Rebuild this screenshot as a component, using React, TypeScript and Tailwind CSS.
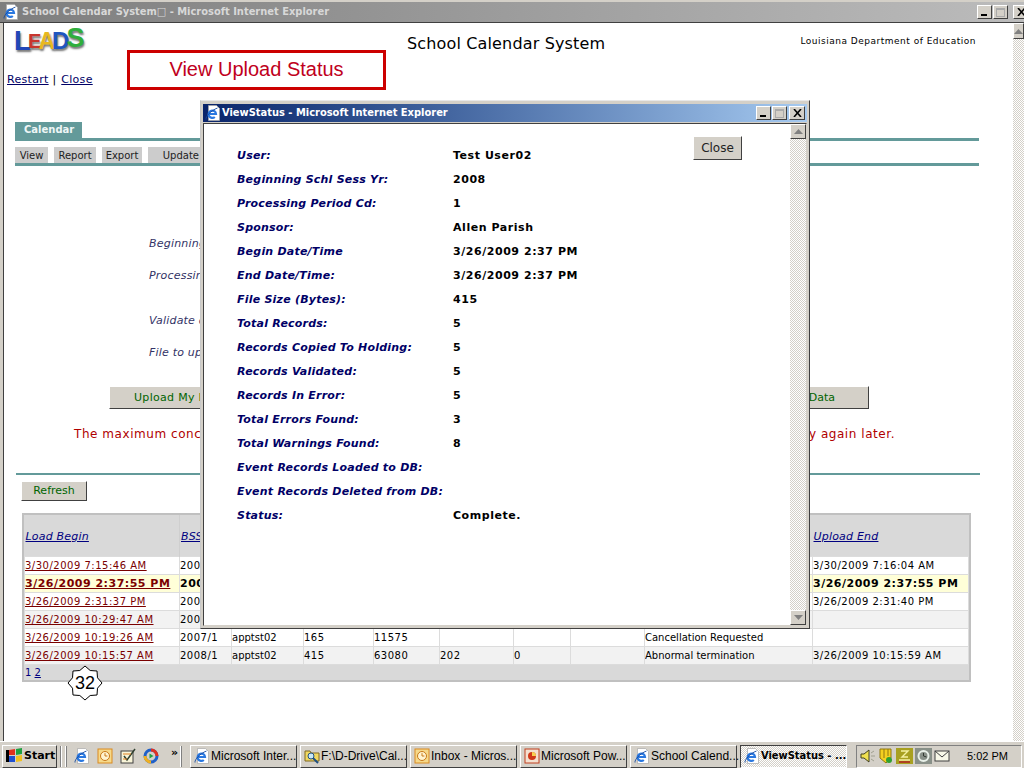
import React from "react";

const raised = "border border-t-white border-l-white border-r-[#404040] border-b-[#404040] bg-[#d4d0c8]";
const dither = "bg-[repeating-conic-gradient(#ffffff_0_25%,#d4d0c8_0_50%)] bg-[length:2px_2px]";
const condensed = "font-['DejaVu_Sans_Condensed','DejaVu_Sans',sans-serif]";

function IE({ size = 16 }: { size?: number }) {
  return (
    <svg width={size} height={size} viewBox="0 0 16 16" className="shrink-0">
      <path d="M3.5 0.5h8l3 3v12h-11z" fill="#fff" stroke="#a8a8a8" strokeWidth="0.7" />
      <path d="M3.6 9h7.4A3.7 3.7 0 1 0 9.8 12" fill="none" stroke="#2a78e0" strokeWidth="2.2" />
      <path d="M1 14.5C0.5 11.5 6 5.5 12.5 3" fill="none" stroke="#14489e" strokeWidth="0.9" />
    </svg>
  );
}

function Arrow({ down = false }: { down?: boolean }) {
  return (
    <svg width="9" height="5" viewBox="0 0 9 5">
      <path d={down ? "M0 0h9L4.5 5z" : "M0 5h9L4.5 0z"} fill="#808080" />
    </svg>
  );
}

function WinButtons({ close }: { close: string }) {
  return (
    <div className="flex items-center">
      <div className={`${raised} w-[15px] h-[14px] relative`}>
        <div className="absolute left-[3px] bottom-[2px] w-[6px] h-[2px] bg-black" />
      </div>
      <div className={`${raised} w-[15px] h-[14px] ml-[1px] flex items-center justify-center`}>
        <div className="w-[9px] h-[9px] border border-[#aaa] border-t-2" />
      </div>
      <div className={`${raised} w-[16px] h-[14px] ${close} flex items-center justify-center`}>
        <svg width="9" height="8" viewBox="0 0 9 8"><path d="M1 0l7 8M8 0L1 8" stroke="#000" strokeWidth="1.6" /></svg>
      </div>
    </div>
  );
}

function Logo() {
  const l = [
    ["L", "#2347b8", "text-[28px]"],
    ["E", "#c8352e", "text-[20px]"],
    ["A", "#e8b820", "text-[23px]"],
    ["D", "#1f55c0", "text-[24px]"],
    ["S", "#2fae3c", "text-[27px]"],
  ];
  return (
    <div className="flex items-center h-[24px] font-['Liberation_Sans',sans-serif] font-bold leading-none [text-shadow:1px_2px_2px_#777] tracking-[-3px]">
      {l.map(([c, col, s], i) => (
        <span key={i} className={`${s} ${i === 4 ? "-mt-[6px]" : ""}`} style={{ color: col }}>{c}</span>
      ))}
    </div>
  );
}

const modalRows: [string, string][] = [
  ["User:", "Test User02"],
  ["Beginning Schl Sess Yr:", "2008"],
  ["Processing Period Cd:", "1"],
  ["Sponsor:", "Allen Parish"],
  ["Begin Date/Time", "3/26/2009 2:37 PM"],
  ["End Date/Time:", "3/26/2009 2:37 PM"],
  ["File Size (Bytes):", "415"],
  ["Total Records:", "5"],
  ["Records Copied To Holding:", "5"],
  ["Records Validated:", "5"],
  ["Records In Error:", "5"],
  ["Total Errors Found:", "3"],
  ["Total Warnings Found:", "8"],
  ["Event Records Loaded to DB:", ""],
  ["Event Records Deleted from DB:", ""],
  ["Status:", "Complete."],
];

const widths = [155, 52, 72, 70, 66, 74, 57, 74, 168, 156];

type Row = { cells: string[]; bg: string; bold?: boolean };
const rows: Row[] = [
  { cells: ["3/30/2009 7:15:46 AM", "2008/1", "", "", "", "", "", "", "", "3/30/2009 7:16:04 AM"], bg: "bg-white" },
  { cells: ["3/26/2009 2:37:55 PM", "2008/1", "", "", "", "", "", "", "", "3/26/2009 2:37:55 PM"], bg: "bg-[#ffffd8]", bold: true },
  { cells: ["3/26/2009 2:31:37 PM", "2008/1", "", "", "", "", "", "", "", "3/26/2009 2:31:40 PM"], bg: "bg-white" },
  { cells: ["3/26/2009 10:29:47 AM", "2008/1", "", "", "", "", "", "", "", ""], bg: "bg-[#f2f2f2]" },
  { cells: ["3/26/2009 10:19:26 AM", "2007/1", "apptst02", "165", "11575", "", "", "", "Cancellation Requested", ""], bg: "bg-white" },
  { cells: ["3/26/2009 10:15:57 AM", "2008/1", "apptst02", "415", "63080", "202", "0", "", "Abnormal termination", "3/26/2009 10:15:59 AM"], bg: "bg-[#f2f2f2]" },
];

function TaskBtn({ icon, label, active = false }: { icon: React.ReactNode; label: string; active?: boolean }) {
  return (
    <div
      className={`w-[107px] h-[23px] flex items-center gap-[1px] pl-[3px] whitespace-nowrap text-black ${
        active
          ? `border border-t-[#404040] border-l-[#404040] border-r-white border-b-white font-bold text-[11px] ${condensed} ${dither}`
          : `${raised} font-['Liberation_Sans',sans-serif] text-[12px]`
      }`}
    >
      {icon}
      <span>{label}</span>
    </div>
  );
}

const Outlook = (
  <svg width="16" height="16" viewBox="0 0 16 16" className="shrink-0">
    <rect x="1" y="1" width="14" height="14" fill="#f6d98a" stroke="#d98a20" />
    <circle cx="8" cy="8" r="4.5" fill="#fff4d0" stroke="#c87818" />
    <path d="M8 5.2V8h2.4" fill="none" stroke="#c87818" />
  </svg>
);

export default function App() {
  return (
    <div className="relative w-[1024px] h-[768px] overflow-hidden bg-[#d4d0c8] flex flex-col font-['DejaVu_Sans',sans-serif] text-black">
      {/* Main browser window */}
      <div className="h-[741px] flex flex-col pt-[2px] shrink-0">
        <div className="h-[20px] flex items-center bg-gradient-to-r from-[#7e7e7e] to-[#bcbcbc] pl-[3px]">
          <IE />
          <span className={`ml-[3px] mt-[1px] text-[11px] font-bold text-[#d8d8d8] whitespace-nowrap ${condensed}`}>School Calendar System□ - Microsoft Internet Explorer</span>
          <div className="ml-auto -mr-[5px]"><WinButtons close="ml-[5px]" /></div>
        </div>
        <div className="h-[1px] bg-[#404040]" />
        <div className="flex-1 flex pl-[3px] min-h-0">
          <div className="flex-1 flex min-h-0 border-l border-[#404040]">
            <div className="flex-1 bg-white min-w-0">
              {/* Header */}
              <div className="h-[99px] flex items-start relative">
                <div className="w-[110px] pl-[3px]">
                  <div className="pl-[7px] pt-[6px]"><Logo /></div>
                  <div className="mt-[19px] text-[11px] whitespace-nowrap tracking-[0.3px]">
                    <a className="underline text-[#000066]">Restart</a> | <a className="underline text-[#000066] ml-[1px]">Close</a>
                  </div>
                </div>
                <div className="ml-[293px] pt-[12px] text-[16px] leading-[18px] tracking-[0.15px] whitespace-nowrap">School Calendar System</div>
                <div className="ml-auto mr-[37px] pt-[11px] text-[9px] leading-[14px] tracking-[0.5px] whitespace-nowrap">Louisiana Department of Education</div>
                <div className="absolute left-[123px] top-[27px] w-[259px] h-[40px] pb-[2px] border-[3px] border-[#cc0000] flex items-center justify-center font-['Liberation_Sans',sans-serif] text-[20px] text-[#c00020]">View Upload Status</div>
              </div>
              {/* Tabs and toolbar */}
              <div className="ml-[11px] w-[964px]">
                <div className="w-[67px] h-[16px] bg-[#639a9a] text-[#eef6f6] text-[10px] font-bold flex items-center pl-[9px] pb-[2px]">Calendar</div>
                <div className="h-[3px] bg-[#639a9a]" />
                <div className="mt-[6px] h-[16px] flex gap-[6px] text-[10px] text-[#222]">
                  <div className="w-[33px] bg-[#cccccc] flex items-center justify-center">View</div>
                  <div className="w-[42px] bg-[#cccccc] flex items-center justify-center">Report</div>
                  <div className="w-[40px] bg-[#cccccc] flex items-center justify-center">Export</div>
                  <div className="w-[60px] bg-[#cccccc] flex items-center justify-end pr-[9px]">Update</div>
                </div>
                <div className="h-[3px] bg-[#639a9a]" />
              </div>
              {/* Form */}
              <div className="pl-[145px] text-[11px] italic text-[#333366] leading-[16px] whitespace-nowrap tracking-[0.2px]">
                <div className="mt-[70px]">Beginning</div>
                <div className="mt-[16px]">Processing</div>
                <div className="mt-[29px]">Validate data:</div>
                <div className="mt-[16px]">File to upload:</div>
              </div>
              <div className="mt-[25px] ml-[105px] w-[760px] flex justify-between text-[11px] text-[#006400]">
                <div className={`w-[200px] h-[23px] pt-[1px] ${raised} flex items-center pl-[24px] tracking-[0.3px] whitespace-nowrap`}>Upload My File</div>
                <div className={`w-[200px] h-[23px] pt-[1px] ${raised} flex items-center justify-end pr-[33px]`}>Data</div>
              </div>
              <div className="mt-[17px] ml-[70px] w-[821px] flex justify-between text-[12px] leading-[16px] tracking-[0.55px] text-[#b00000] whitespace-nowrap">
                <span>The maximum concurrent</span>
                <span>Please try again later.</span>
              </div>
              <div className="mt-[31px] ml-[12px] w-[964px] h-[2px] bg-[#639a9a]" />
              <div className={`mt-[6px] ml-[17px] w-[66px] h-[20px] pt-[1px] ${raised} flex items-center justify-center text-[11px] text-[#006400]`}>Refresh</div>
              {/* Table */}
              <div className="mt-[12px] ml-[18px] w-[949px] h-[169px] border-[2px] border-[#c0c0c0] bg-[#d9d9d9]">
                <table className="table-fixed border-collapse w-[944px] text-[10px]">
                  <colgroup>
                    {widths.map((w, i) => <col key={i} style={{ width: w }} />)}
                  </colgroup>
                  <tbody>
                    <tr className="h-[41px] bg-[#d9d9d9] text-[11px] italic text-[#000080] tracking-[0.2px]">
                      <td className="pl-[1px] pt-[3px] underline">Load Begin</td>
                      <td className="pl-[1px] pt-[3px] underline border-l border-[#cfcfcf]">BSS</td>
                      <td colSpan={7} />
                      <td className="pl-[1px] pt-[3px] underline">Upload End</td>
                    </tr>
                    {rows.map((r, i) => (
                      <tr key={i} className={`h-[18px] ${r.bg} ${r.bold ? "font-bold text-[11px]" : ""}`}>
                        {r.cells.map((c, j) => (
                          <td
                            key={j}
                            className={`${r.bold ? "pt-[1px]" : ""} border border-[#dcdcdc] whitespace-nowrap overflow-hidden ${j === 2 || j === 8 ? "" : "tracking-[0.5px]"} ${j === 0 ? "underline text-[#7a0000]" : ""}`}
                          >
                            {c}
                          </td>
                        ))}
                      </tr>
                    ))}
                  </tbody>
                </table>
                <div className="mt-[1px] text-[10px] leading-[14px] text-[#000080] pl-[1px]">1 <a className="underline">2</a></div>
              </div>
            </div>
            {/* Scrollbar */}
            <div className={`w-[11px] ${dither} shrink-0 flex flex-col`}>
              <div className={`${raised} h-[16px] w-full flex items-center justify-center`}><Arrow /></div>
            </div>
          </div>
        </div>
      </div>

      {/* Taskbar */}
      <div className="flex-1 border-t border-white flex items-center pl-[2px] pt-[2px] gap-0">
        <div className={`${raised} w-[55px] h-[23px] flex items-center pl-[3px] gap-[1px] text-[11px] font-bold`}>
          <svg width="17" height="16" viewBox="0 0 17 16" className="shrink-0">
            <path d="M0 2h3v12H0z" fill="#000" />
            <path d="M3 2l6-1v6H3z" fill="#e0301e" />
            <path d="M10 1l6-1v6l-6 1z" fill="#20a040" />
            <path d="M3 8h6v6H3z" fill="#2050d0" />
            <path d="M10 8l6-1v6l-6 1z" fill="#f0c020" />
          </svg>
          Start
        </div>
        <div className="ml-[3px] w-[2px] h-[21px] border-l border-[#808080] border-r border-r-white" />
        <div className="ml-[3px] w-[2px] h-[21px] border-l border-white border-r border-r-[#808080]" />
        <div className="ml-[7px] flex items-center gap-[7px] w-[103px]">
          <IE size={16} />
          {Outlook}
          <svg width="16" height="16" viewBox="0 0 16 16" className="shrink-0">
            <rect x="1" y="3" width="12" height="12" fill="#f8f4d8" stroke="#404040" />
            <path d="M4 8l3 4 8-11" fill="none" stroke="#304030" strokeWidth="1.5" />
            <path d="M3 6h8M3 11h4" stroke="#e08020" />
          </svg>
          <svg width="16" height="16" viewBox="0 0 16 16" className="shrink-0">
            <circle cx="8" cy="8" r="6" fill="none" stroke="#2060c8" strokeWidth="3" />
            <path d="M8 2a6 6 0 016 6" fill="none" stroke="#e03020" strokeWidth="3" />
            <path d="M2 8a6 6 0 006 6" fill="none" stroke="#f0b020" strokeWidth="3" />
            <path d="M6.5 5.5l4 2.5-4 2.5z" fill="#20a040" />
          </svg>
          <span className="text-[11px] font-bold -mt-[6px] ml-[5px]">»</span>
        </div>
        <div className="ml-[3px] w-[2px] h-[21px] border-l border-white border-r border-r-[#808080]" />
        <div className="ml-[8px] flex gap-[3px]">
          <TaskBtn icon={<IE />} label="Microsoft Inter..." />
          <TaskBtn
            icon={
              <svg width="16" height="16" viewBox="0 0 16 16" className="shrink-0">
                <path d="M1 3h5l1 2h8v8H1z" fill="#f0d860" stroke="#806820" />
                <circle cx="7" cy="8" r="3" fill="#c8e8f8" stroke="#205080" />
                <path d="M9 10l5 5" stroke="#205080" strokeWidth="2" />
              </svg>
            }
            label="F:\D-Drive\Cal..."
          />
          <TaskBtn icon={Outlook} label="Inbox - Micros..." />
          <TaskBtn
            icon={
              <svg width="16" height="16" viewBox="0 0 16 16" className="shrink-0">
                <rect x="1" y="1" width="14" height="14" fill="#f4e0d0" stroke="#c04020" />
                <circle cx="8" cy="8" r="4" fill="#d03818" />
                <path d="M8 8V4a4 4 0 014 4z" fill="#f8d050" />
              </svg>
            }
            label="Microsoft Pow..."
          />
          <TaskBtn icon={<IE />} label="School Calend..." />
          <TaskBtn icon={<IE />} label="ViewStatus - ..." active />
        </div>
        <div className="ml-[9px] w-[166px] h-[23px] border border-t-[#808080] border-l-[#808080] border-r-white border-b-white flex items-center pl-[3px] gap-[2px]">
          <svg width="16" height="16" viewBox="0 0 16 16" className="shrink-0">
            <path d="M1 6h3l5-4v12l-5-4H1z" fill="#f0e050" stroke="#404020" />
            <path d="M11 5l3-2M11 8h4M11 11l3 2" stroke="#a0a090" />
          </svg>
          <svg width="16" height="16" viewBox="0 0 16 16" className="shrink-0">
            <path d="M2 1h11v9l-5 5-6-5z" fill="#f4d020" stroke="#907810" />
            <path d="M6 1v9M10 1v7" stroke="#907810" />
            <circle cx="11" cy="12" r="3" fill="#30a030" />
          </svg>
          <svg width="17" height="16" viewBox="0 0 17 16" className="shrink-0">
            <rect x="0" y="0" width="17" height="16" fill="#a8a020" />
            <path d="M5 3h7L6 9h6M3 12h11" fill="none" stroke="#f4f0a0" strokeWidth="1.4" />
            <path d="M3 14h11" stroke="#b02020" strokeWidth="1.5" />
          </svg>
          <svg width="17" height="16" viewBox="0 0 17 16" className="shrink-0">
            <rect x="0" y="0" width="17" height="16" fill="#889088" />
            <circle cx="8.5" cy="8" r="5" fill="none" stroke="#e8f0e8" strokeWidth="2" />
            <path d="M8.5 5v3l3 1" fill="none" stroke="#303830" />
          </svg>
          <svg width="16" height="12" viewBox="0 0 16 12" className="shrink-0">
            <rect x="1" y="1" width="14" height="10" fill="#f8f8e8" stroke="#404040" />
            <path d="M1 1l7 6 7-6" fill="none" stroke="#404040" />
          </svg>
          <span className="ml-[15px] font-['Liberation_Sans',sans-serif] text-[11px]">5:02 PM</span>
        </div>
      </div>

      {/* Popup window */}
      <div className="absolute left-[200px] top-[100px] w-[610px] h-[529px] bg-[#d4d0c8] border border-t-[#e8e8e8] border-l-[#c8c8c8] border-r-[#404040] border-b-[#404040] pl-[2px] pr-[2px] pb-[2px] pt-[3px] flex flex-col">
        <div className="h-[18px] flex items-center bg-gradient-to-r from-[#0a246a] to-[#a6caf0] pl-[2px] pr-[2px] shrink-0">
          <IE />
          <span className={`ml-[1px] text-[11px] font-bold text-white whitespace-nowrap ${condensed}`}>ViewStatus - Microsoft Internet Explorer</span>
          <div className="ml-auto"><WinButtons close="ml-[2px]" /></div>
        </div>
        <div className="mt-[1px] flex-1 flex min-h-0 border border-t-[#404040] border-l-[#404040] border-b-[#d4d0c8] border-r-[#d4d0c8]">
          <div className="flex-1 bg-white relative pl-[33px] pt-[20px] min-w-0">
            {modalRows.map(([k, v]) => (
              <div key={k} className="flex h-[24px] items-center text-[11px] font-bold whitespace-nowrap">
                <span className="w-[216px] italic text-[#000066] tracking-[0.22px]">{k}</span>
                <span className="text-black tracking-[0.55px]">{v}</span>
              </div>
            ))}
            <div className={`absolute left-[489px] top-[12px] w-[49px] h-[24px] ${raised} flex items-center justify-center text-[12px] text-[#222]`}>Close</div>
          </div>
          <div className={`w-[16px] shrink-0 ${dither} flex flex-col justify-between`}>
            <div className={`${raised} h-[15px] flex items-center justify-center`}><Arrow /></div>
            <div className={`${raised} h-[15px] flex items-center justify-center`}><Arrow down /></div>
          </div>
        </div>
      </div>

      {/* Slide number marker */}
      <div className="absolute left-[67px] top-[665px] w-[36px] h-[36px] flex items-center justify-center">
        <svg width="36" height="36" viewBox="0 0 36 36" className="absolute inset-0">
          <polygon
            points="18,1 23.2,5.5 30,6 30.5,12.8 35,18 30.5,23.2 30,30 23.2,30.5 18,35 12.8,30.5 6,30 5.5,23.2 1,18 5.5,12.8 6,6 12.8,5.5"
            fill="#fff"
            stroke="#000"
            strokeWidth="1"
          />
        </svg>
        <span className="relative font-['Liberation_Sans',sans-serif] text-[18px] leading-none">32</span>
      </div>
    </div>
  );
}
